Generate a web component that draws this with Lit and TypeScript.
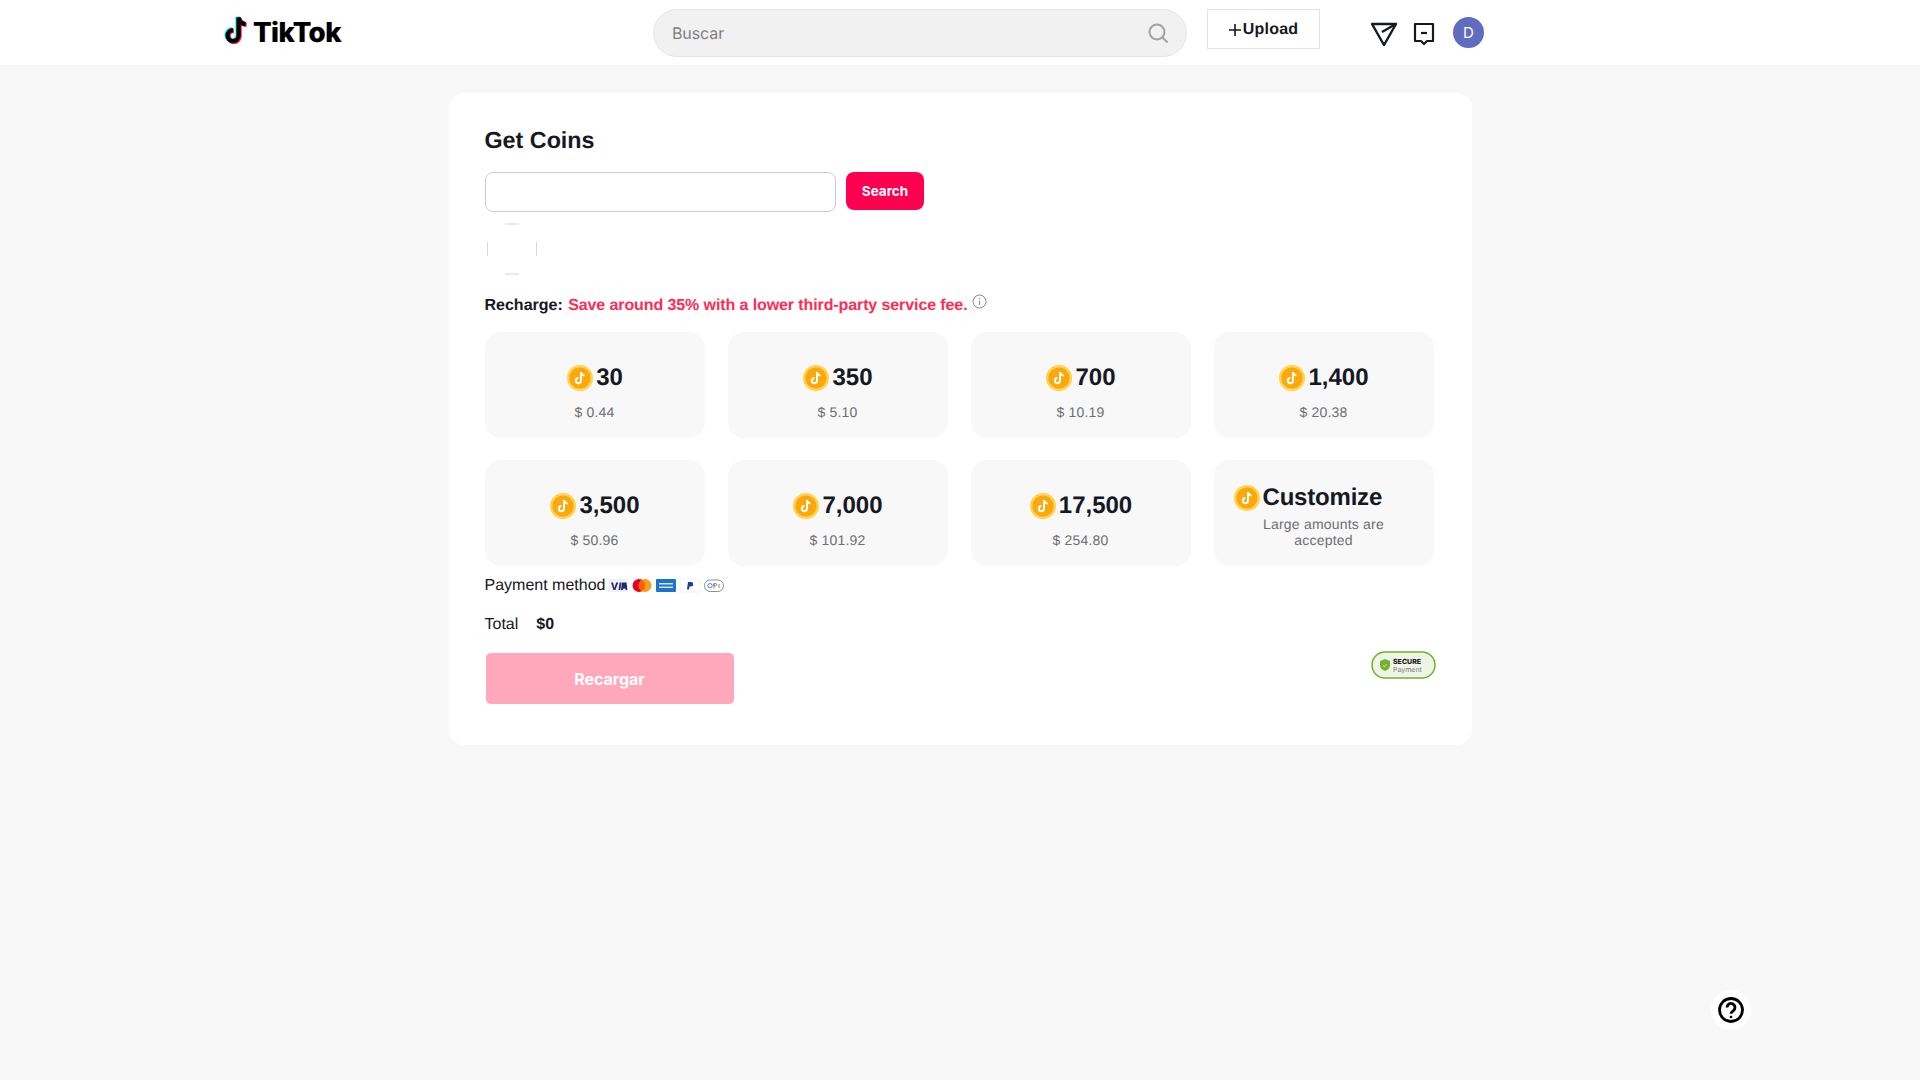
import { LitElement, html, css, svg } from "lit";
import { customElement } from "lit/decorators.js";

const coin = html`<svg class="coin" viewBox="0 0 26 26" aria-hidden="true">
  <circle cx="13" cy="13" r="13" fill="#ffd24f"/>
  <circle cx="13" cy="13" r="10.6" fill="#fba80c"/>
  <path d="M14 7v8.6a2.6 2.6 0 1 1-2.6-2.6" fill="none" stroke="#fff" stroke-width="2"/>
  <path d="M14 7.4c.4 1.8 1.6 2.8 3.5 3" fill="none" stroke="#fff" stroke-width="2"/>
</svg>`;

const note = (c: string) => svg`<path d="M14 3v17.400a5.300 5.300 0 1 1-5.300-5.300" fill="none" stroke="${c}" stroke-width="4.200"/><path d="M14 3c.6 3.800 3 6 6.800 6.300" fill="none" stroke="${c}" stroke-width="4.200"/>`;

const packs = [
  ["30", "$ 0.44"],
  ["350", "$ 5.10"],
  ["700", "$ 10.19"],
  ["1,400", "$ 20.38"],
  ["3,500", "$ 50.96"],
  ["7,000", "$ 101.92"],
  ["17,500", "$ 254.80"],
];

@customElement("app-root")
export class AppRoot extends LitElement {
  static styles = css`
    :host { display: block; min-height: 1080px; background: #f8f8f8; font-family: "Liberation Sans", Arial, sans-serif; color: #161823; position: relative; text-rendering: geometricPrecision; }
    .header { height: 65px; background: #fff; display: flex; align-items: flex-start; padding-left: 224px; box-sizing: border-box; }
    .logo { width: 118px; height: 32px; margin-top: 15px; display: flex; align-items: center; gap: 3px; }
    .logo svg { width: 26px; height: 30px; flex: none; margin-top: -2px; }
    .logo span { font-family: Inter, sans-serif; font-weight: 800; font-size: 27.500px; letter-spacing: -0.5px; color: #000; line-height: 32px; margin-top: 2px; text-shadow: -0.6px 0 0 rgba(37,244,238,.45), 0.6px 0 0 rgba(254,44,85,.45); }
    .search { margin-left: 311px; margin-top: 9px; width: 534px; height: 48px; box-sizing: border-box; border-radius: 24px; background: #f1f1f2; border: 1px solid #e6e6e8; display: flex; align-items: center; justify-content: space-between; padding: 0 17px 0 18px; }
    .search span { font-family: Inter, sans-serif; font-size: 16px; color: #808084; letter-spacing: -.1px; }
    .search svg { width: 22px; height: 22px; }
    .upload { margin-left: 20px; margin-top: 9px; width: 113px; height: 40px; box-sizing: border-box; border: 1px solid #e3e3e4; background: #fff; display: flex; align-items: center; justify-content: center; gap: 2px; font-weight: 700; font-size: 16px; letter-spacing: .2px; padding-top: 1px; }
    .upload svg { width: 12px; height: 12px; }
    .ic1 { margin-left: 50px; margin-top: 21px; width: 28px; height: 26px; }
    .ic2 { margin-left: 14px; margin-top: 21px; width: 24px; height: 26px; }
    .avatar { margin-left: 17px; margin-top: 17px; width: 31px; height: 31px; border-radius: 50%; background: #5f6cc0; color: #fff; font-size: 15px; display: flex; align-items: center; justify-content: center; font-family: Inter, sans-serif; }
    .main { display: flex; justify-content: center; padding-top: 28px; }
    .card { width: 1023px; height: 652px; box-sizing: border-box; background: #fff; border-radius: 16px; padding: 32px 36px 0; position: relative; }
    h1 { margin: 0; font-size: 23.300px; line-height: 30px; font-weight: 700; }
    .form { display: flex; gap: 10px; margin-top: 17px; align-items: flex-start; }
    .form input { width: 351px; height: 40px; box-sizing: border-box; border: 1px solid #ccc; border-radius: 8px; background: #fff; padding: 0 10px; outline: none; }
    .form button { width: 78px; height: 38px; border: 0; border-radius: 8px; background: #ff0050; color: #fff; font-family: Inter, sans-serif; font-weight: 700; font-size: 13.500px; padding: 0 0 0 1px; }
    .ph { display: block; width: 52px; height: 52px; margin: 11px 0 0 1px; }
    .recharge { margin-top: 21px; font-weight: 700; font-size: 16px; line-height: 20px; display: flex; align-items: flex-start; white-space: pre; }
    .recharge em { font-style: normal; color: #fe2c55; letter-spacing: -.1px; margin-left: 1px; }
    .recharge svg { width: 15px; height: 15px; margin: -2px 0 0 4px; }
    .grid { display: grid; grid-template-columns: repeat(4, 220px); grid-auto-rows: 106px; gap: 22px 23px; margin-top: 16px; }
    .pack { background: #f8f8f8; border-radius: 16px; display: flex; flex-direction: column; align-items: center; padding-top: 33px; box-sizing: border-box; }
    .amt { display: flex; align-items: center; gap: 3px; font-weight: 700; font-size: 24px; line-height: 26px; padding-left: 1px; }
    .coin { width: 26px; height: 26px; flex: none; }
    .price { margin-top: 12px; font-size: 14px; line-height: 18px; color: #6e6e73; letter-spacing: .2px; }
    .custom { padding-top: 25px; }
    .custom .amt { align-self: flex-start; margin-left: 19px; letter-spacing: -.2px; }
    .custom .price { margin-top: 5px; line-height: 16px; text-align: center; width: 150px; }
    .pay { display: flex; align-items: center; gap: 3px; font-size: 16px; margin-top: 10px; line-height: 20px; }
    .pay svg { display: block; width: 116px; height: 16px; }
    .total { margin-top: 19px; font-size: 16px; line-height: 20px; display: flex; gap: 18px; }
    .total b { font-weight: 700; }
    .rec { display: block; margin-top: 17px; width: 250px; height: 53px; box-sizing: border-box; border: 1px solid #fff; border-radius: 6px; background: #ffa8bb; color: #fff; font-family: Inter, sans-serif; font-weight: 700; font-size: 16px; padding: 0; }
    .secure { position: absolute; right: 36px; top: 558px; width: 65px; height: 28px; }
    .help { position: absolute; left: 1711px; top: 990px; width: 40px; height: 40px; border-radius: 50%; background: #fff; display: flex; align-items: center; justify-content: center; }
    .help svg { width: 28px; height: 28px; }
  `;

  render() {
    return html`
      <div class="header">
        <div class="logo">
          <svg viewBox="0 1 25 28" aria-hidden="true">
            <g transform="translate(-1,-0.8)">${note("#25f4ee")}</g>
            <g transform="translate(1,0.8)">${note("#fe2c55")}</g>
            <g>${note("#000")}</g>
          </svg>
          <span>TikTok</span>
        </div>
        <div class="search">
          <span>Buscar</span>
          <svg viewBox="0 0 22 22" fill="none" stroke="#a2a2a6" stroke-width="2"><circle cx="10" cy="10" r="7.5"/><path d="M15.5 15.5 20.5 20.5"/></svg>
        </div>
        <div class="upload">
          <svg viewBox="0 0 12 12" stroke="#161823" stroke-width="1.600"><path d="M6 0v12M0 6h12"/></svg>Upload
        </div>
        <svg class="ic1" viewBox="0 0 28 26" fill="none" stroke="#161823" stroke-width="2.400" stroke-linejoin="round"><path d="M2 3h24L14 24 Z"/><path d="M25 3.500 12 11"/></svg>
        <svg class="ic2" viewBox="0 0 24 26" fill="none" stroke="#161823" stroke-width="2.200" stroke-linejoin="round"><path d="M3 3h18v17h-6l-3 3-3-3H3Z"/><path d="M9 12h6"/></svg>
        <div class="avatar">D</div>
      </div>
      <div class="main">
        <div class="card">
          <h1>Get Coins</h1>
          <div class="form"><input aria-label="Search" /><button>Search</button></div>
          <svg class="ph" viewBox="0 0 52 52" aria-hidden="true" fill="none" stroke="#d9d9d9"><path d="M19 1h14M19 51h14M1.500 19v14M50.500 19v14"/></svg>
          <div class="recharge">Recharge: <em>Save around 35% with a lower third-party service fee.</em><svg viewBox="0 0 15 15" fill="none" stroke="#8a8b91"><circle cx="7.5" cy="7.5" r="6.5"/><path d="M7.5 6.6v4.4M7.5 4v1.4"/></svg></div>
          <div class="grid">
            ${packs.map(([a, p]) => html`<div class="pack"><div class="amt">${coin}${a}</div><div class="price">${p}</div></div>`)}
            <div class="pack custom"><div class="amt">${coin}Customize</div><div class="price">Large amounts are accepted</div></div>
          </div>
          <div class="pay">Payment method
            <svg viewBox="0 0 116 16" aria-hidden="true">
              <rect x="0" y="1" width="20" height="13" rx="1" fill="#f1f1f5"/>
              <path d="M3 4.500h2l1.300 5.500 2-5.500h2L7.300 12H5.500ZM10.500 12l1.200-7.500h1.800L12.300 12ZM14 4.500h4.500l.8 7.500h-1.700l-.2-1.500h-2l-.7 1.500H13Z" fill="#1d2a6d"/>
              <circle cx="31" cy="7.500" r="6.500" fill="#eb001b"/><circle cx="37" cy="7.500" r="6.500" fill="#f79e1b"/><path d="M34 2a6.500 6.500 0 0 1 0 11 6.500 6.500 0 0 1 0-11Z" fill="#ff5f00"/>
              <rect x="48" y="1" width="20" height="13" rx="1" fill="#1b75c4"/><path d="M51 5h14v1.500H51ZM51 8.500h14V10H51Z" fill="#cfe3f5"/>
              <rect x="72" y="1" width="20" height="13" rx="1" fill="#fff" stroke="#f1f1f1"/><path d="M80 4h3a2 2 0 0 1 0 4.500h-1.500L81 11.500h-2Z" fill="#1d3f8f"/>
              <rect x="96.500" y="2" width="19" height="11.500" rx="5.700" fill="#fff" stroke="#8f8f8f"/><circle cx="102" cy="7.700" r="2.200" fill="none" stroke="#4285f4"/><path d="M106 5.500h1.500a1 1 0 0 1 0 2.300H106Zm0 0v5M110 7h2M110 9h2" fill="none" stroke="#6a6a6a" stroke-width=".8"/>
            </svg>
          </div>
          <div class="total"><span>Total</span><b>$0</b></div>
          <button class="rec">Recargar</button>
          <svg class="secure" viewBox="0 0 65 28" aria-hidden="true">
            <rect x="1" y="1" width="63" height="26" rx="13" fill="#eef5e6" stroke="#6fb52c" stroke-width="1.500"/>
            <path d="M9 10l5-2 5 2v4c0 3-2 5-5 6-3-1-5-3-5-6Z" fill="#6fb52c"/>
            <path d="M12 14l1.500 1.500 2.500-2.500" fill="none" stroke="#fff"/>
            <text x="22" y="13" font-family="Inter, sans-serif" font-size="7" font-weight="800" fill="#1c1c1c">SECURE</text>
            <text x="22" y="21" font-family="Inter, sans-serif" font-size="7" fill="#7a7a7a">Payment</text>
          </svg>
        </div>
      </div>
      <div class="help">
        <svg viewBox="0 0 28 28" fill="none" stroke="#000" stroke-width="2.800"><circle cx="14" cy="14" r="11.500"/><path d="M10 11.500a4 4 0 1 1 6.200 3.300c-1.500 1-2.200 1.500-2.200 3"/><circle cx="14" cy="21" r=".6" fill="#000" stroke-width="1.500"/></svg>
      </div>
    `;
  }
}
